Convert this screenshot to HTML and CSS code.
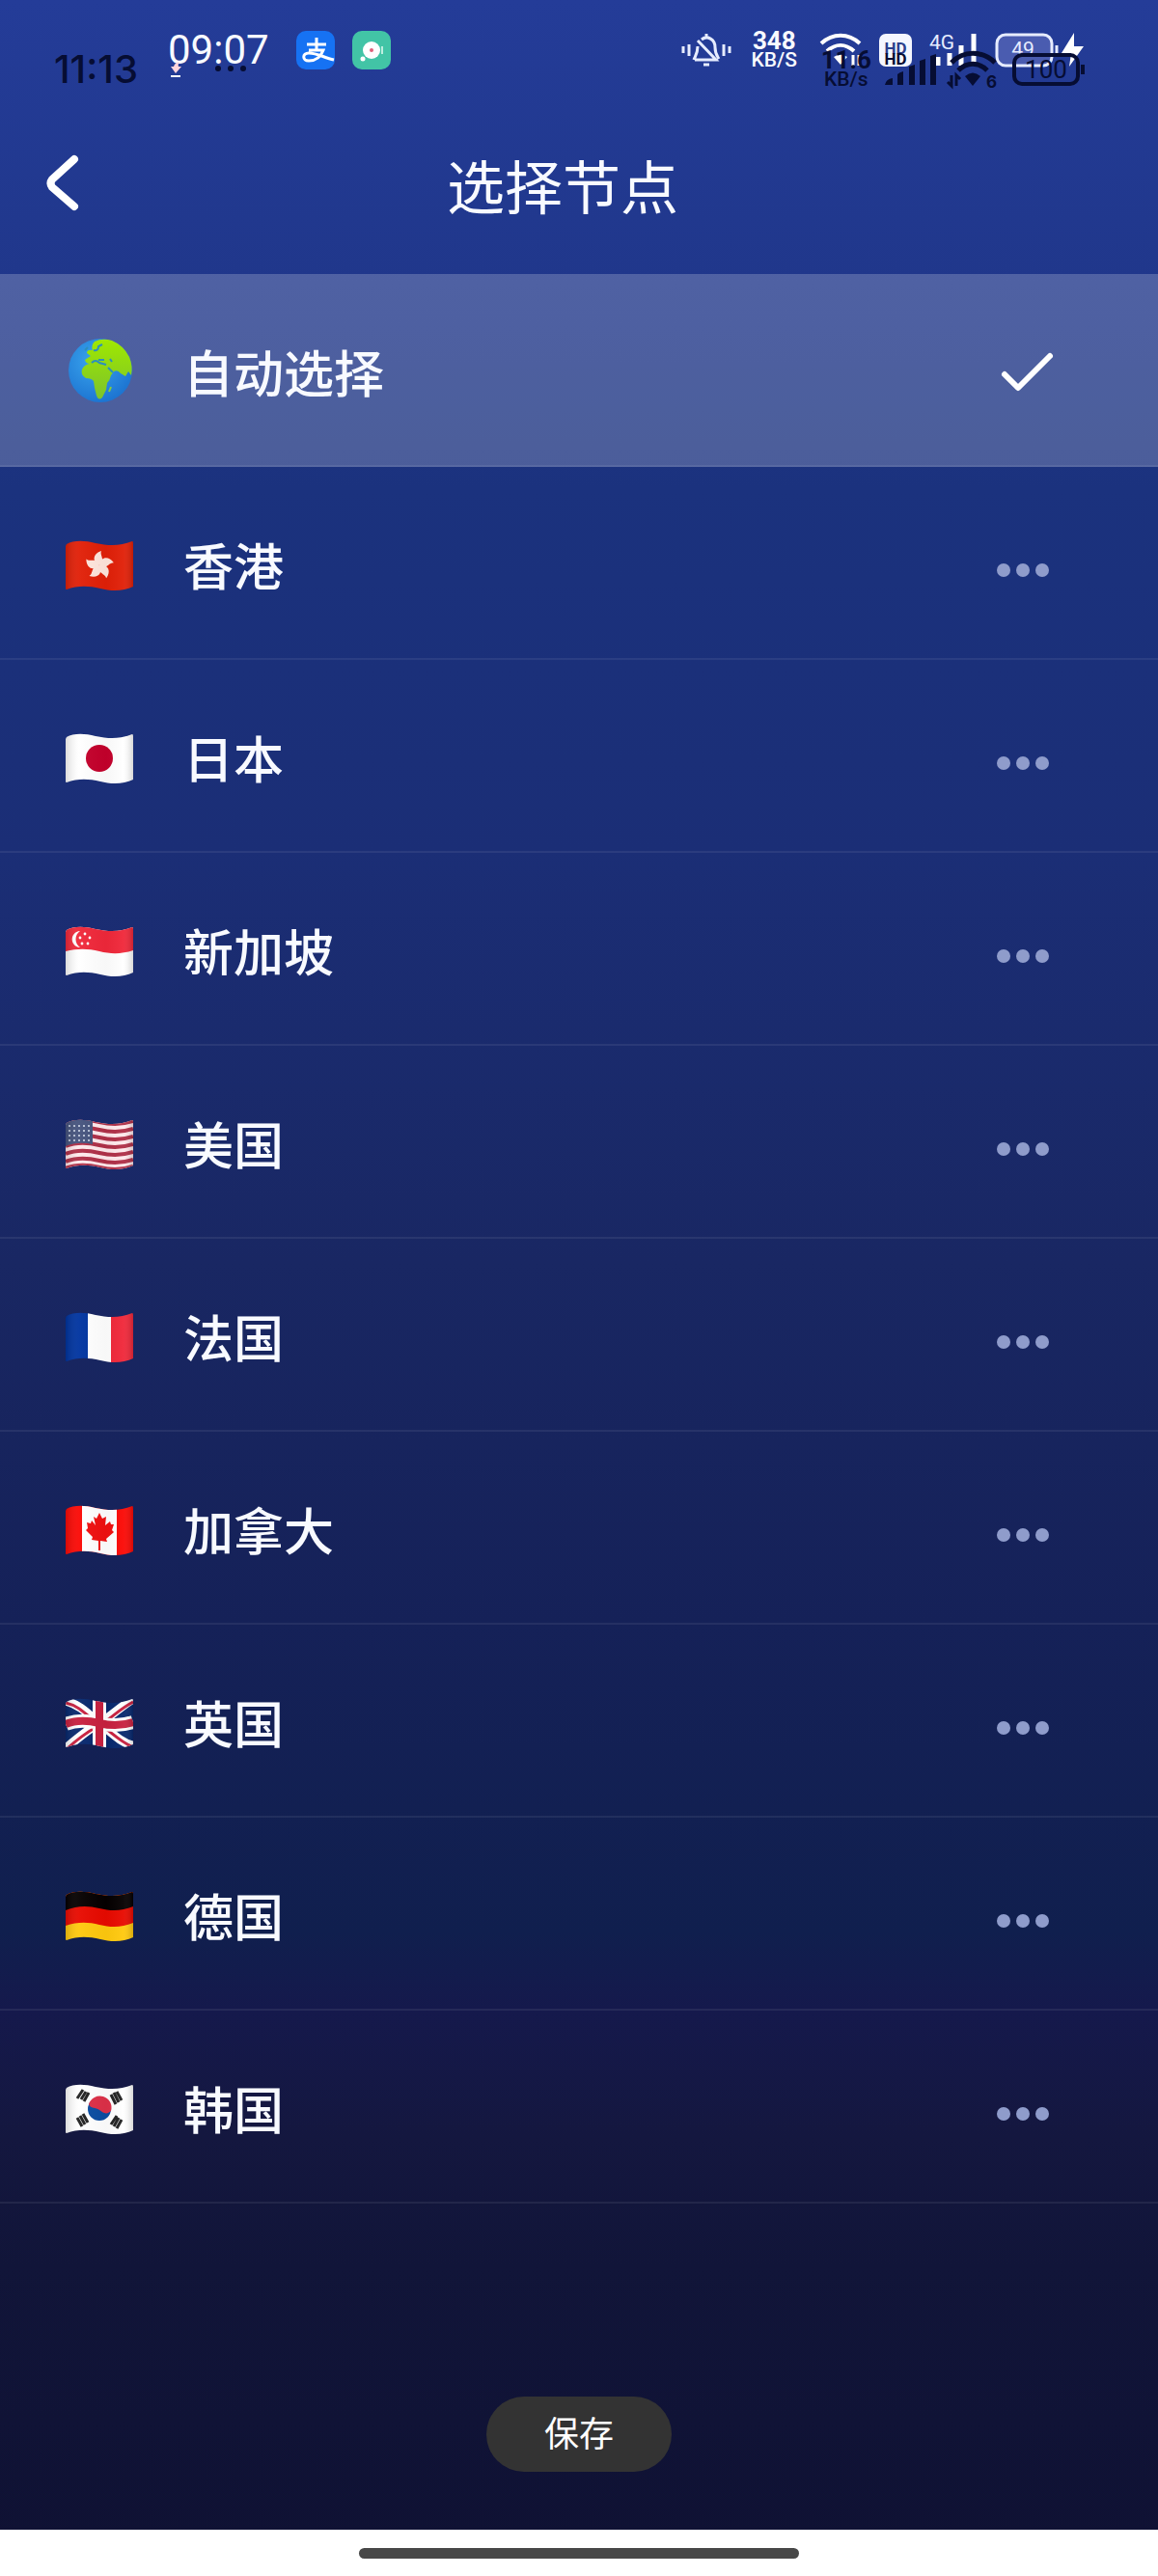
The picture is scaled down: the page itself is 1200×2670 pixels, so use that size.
FILE: index.html
```html
<!DOCTYPE html>
<html lang="zh-CN">
<head>
    <meta charset="UTF-8">
    <meta name="viewport" content="width=device-width, initial-scale=1.0">
    <title>选择节点</title>
    <link rel="stylesheet" href="styles.css">
</head>
<body>
    <!-- shared shapes -->
    <svg class="defs" width="0" height="0" aria-hidden="true">
        <defs>
            <clipPath id="wave">
                <path d="M1 4C8 0 19 0 31 3C45 6 57 6 69 1Q70 1 70 3V48C60 53 47 53 36 50C23 47 12 47 1 51Q0 51 0 50V6Z"/>
            </clipPath>
            <linearGradient id="shade">
                <stop offset="0" stop-color="#000" stop-opacity=".14"/>
                <stop offset=".2" stop-color="#fff" stop-opacity=".04"/>
                <stop offset=".6" stop-color="#000" stop-opacity=".03"/>
                <stop offset=".85" stop-color="#fff" stop-opacity=".04"/>
                <stop offset="1" stop-color="#000" stop-opacity=".16"/>
            </linearGradient>
            <radialGradient id="sea" cx=".4" cy=".35" r=".7">
                <stop offset="0" stop-color="#3aa5ee"/>
                <stop offset="1" stop-color="#1b72d0"/>
            </radialGradient>
            <linearGradient id="land" x1="0" y1="0" x2="0" y2="1">
                <stop offset="0" stop-color="#a0e800"/>
                <stop offset="1" stop-color="#7cc32c"/>
            </linearGradient>
        </defs>
        <symbol id="dots" viewBox="0 0 56 56">
            <circle cx="8" cy="36" r="7"/>
            <circle cx="28" cy="36" r="7"/>
            <circle cx="48" cy="36" r="7"/>
        </symbol>
    </svg>

    <header class="header">
        <div class="status status-light">
            <div class="status-side">
                <span class="clock">09:07</span>
                <div class="apps">
                    <svg width="40" height="40" viewBox="0 0 40 40">
                        <rect width="40" height="40" rx="10" fill="#1672f3"/>
                        <path d="M11 14H31M21 7V20M13 20H28C25 28 19 31 13 31C6 31 6 23 13 23C22 23 29 28 39 30" fill="none" stroke="#fff" stroke-width="3"/>
                    </svg>
                    <svg width="40" height="40" viewBox="0 0 40 40">
                        <rect width="40" height="40" rx="10" fill="#42c4a6"/>
                        <circle cx="20" cy="20" r="9" fill="#fff"/>
                        <circle cx="11" cy="29" r="2.5" fill="#fff"/>
                        <path d="M31 16V24" stroke="#bfeee0" stroke-width="2"/>
                        <circle cx="20" cy="20" r="2" fill="#e0607a"/>
                    </svg>
                </div>
            </div>
            <div class="status-side status-right">
                <svg width="52" height="36" viewBox="0 0 52 36" fill="none" stroke="#e6ecff" stroke-width="3">
                    <path d="M2 14V21M8 12V24M44 12V24M50 14V21"/>
                    <path d="M14 28H36L17 8M17 14C17 22 14 25 13 28M21 7C27 2 35 7 35 15C35 22 37 24 39 27M26 1V4M23 33H29"/>
                </svg>
                <div class="speed">
                    <span class="speed-num">348</span>
                    <span class="speed-unit">KB/S</span>
                </div>
                <svg width="44" height="36" viewBox="0 0 44 36" fill="none" stroke="#fff" stroke-width="4">
                    <path d="M2 11C14 0 30 0 42 11M8 19C17 11 27 11 36 19"/>
                    <path d="M15 25Q22 20 29 25L22 33Z" fill="#fff" stroke="none"/>
                    <path d="M35 23V34M41 23V34" stroke-width="3"/>
                </svg>
                <svg width="34" height="36" viewBox="0 0 34 36">
                    <rect y="1" width="34" height="34" rx="7" fill="#f4f6ff"/>
                    <text x="17" y="22" text-anchor="middle" class="hd hd-blue">HD</text>
                </svg>
                <svg width="50" height="36" viewBox="0 0 50 36">
                    <text x="0" y="17" class="net">4G</text>
                    <path d="M9 25V34M21 21V34M33 13V34M46 1V34" stroke="#fff" stroke-width="5"/>
                </svg>
                <svg width="92" height="36" viewBox="0 0 92 36">
                    <rect x="2" y="2" width="57" height="32" rx="9" fill="#4a5cb0" stroke="#e6ecff" stroke-width="3"/>
                    <path d="M64 13V25" stroke="#e6ecff" stroke-width="3"/>
                    <text x="29" y="24" text-anchor="middle" class="level">49</text>
                    <path d="M82 0L69 21H79L77 35L92 14H82Z" fill="#fff"/>
                </svg>
            </div>
        </div>

        <!-- second bar sits over the first one -->
        <div class="status status-dark">
            <div class="status-side">
                <span class="clock">11:13</span>
                <svg width="80" height="24" viewBox="0 0 80 24">
                    <path d="M0 19H10" stroke="#fff" stroke-width="2"/>
                    <path d="M0 9H3Q4 5 9 4Q7 7 8 9H11L5 16Z" fill="#ffd5dc"/>
                    <circle cx="49" cy="11" r="3"/>
                    <circle cx="62" cy="11" r="3"/>
                    <circle cx="75" cy="11" r="3"/>
                </svg>
            </div>
            <div class="status-side status-right">
                <div class="speed">
                    <span class="speed-num">11.6</span>
                    <span class="speed-unit">KB/s</span>
                </div>
                <svg width="54" height="44" viewBox="0 0 54 44">
                    <text x="11" y="17" text-anchor="middle" class="hd">HD</text>
                    <path d="M0 38Q1 32 8 31V38ZM13 27Q15 25 19 24V38H13ZM25 19L31 17V38H25ZM36 13L42 11V38H36ZM47 8L53 6V38H47Z"/>
                </svg>
                <svg width="50" height="44" viewBox="3 0 50 44">
                    <path d="M4 15C16 2 36 2 49 15M11 23C20 14 32 14 41 23" fill="none" stroke="#060d33" stroke-width="5"/>
                    <path d="M18 29Q26 22 34 29L26 39Z"/>
                    <path d="M4 28V39L0 35M9 39V28L13 32" fill="none" stroke="#060d33" stroke-width="3"/>
                    <text x="40" y="41" class="gen">6</text>
                </svg>
                <svg width="76" height="44" viewBox="0 0 76 44">
                    <rect x="2" y="7" width="66" height="30" rx="8" fill="none" stroke="#060d33" stroke-width="4"/>
                    <path d="M73 17V27" stroke="#060d33" stroke-width="4"/>
                    <text x="35" y="31" text-anchor="middle" class="full">100</text>
                </svg>
            </div>
        </div>

        <div class="title-bar">
            <button class="back" type="button" aria-label="返回">
                <svg width="36" height="60" viewBox="0 4 36 60" fill="none" stroke="#fff" stroke-width="8" stroke-linecap="round" stroke-linejoin="round">
                    <path d="M31 5L8 26Q5 30 8 34L31 54"/>
                </svg>
            </button>
            <h1 class="title">选择节点</h1>
        </div>
    </header>

    <main class="content">
        <ul class="nodes">
            <li class="node node-active">
                <button class="pick" type="button">
                    <svg class="flag" viewBox="0 4 70 70">
                        <circle cx="36" cy="36" r="33" fill="url(#sea)"/>
                        <path d="M30 6Q38 2 48 5Q60 10 66 22Q70 32 68 41L65 37L62 42L57 39Q54 35 50 37L47 41Q46 46 43 49L42 56L38 64Q34 68 32 62L30 54L29 47Q27 44 21 44Q15 40 17 35Q19 30 25 29Q21 29 20 25L26 21L22 18Q22 14 28 15Q26 10 30 6Z" fill="url(#land)"/>
                        <path d="M20 15L23 12M29 15Q34 16 34 11L38 9M27 28Q31 24 35 28L42 30M34 25L40 25M46 24L48 27M44 33L49 38" fill="none" stroke="#2c8fbd" stroke-width="2"/>
                        <path d="M45 58L47 53" stroke="#84cc3c" stroke-width="2"/>
                    </svg>
                    <span>自动选择</span>
                </button>
                <svg class="check" width="56" height="56" viewBox="0 0 56 56" fill="none" stroke="#fff" stroke-width="6" stroke-linecap="round" stroke-linejoin="round">
                    <path d="M9 33L23 47L56 14"/>
                </svg>
            </li>
            <li class="node">
                <button class="pick" type="button">
                    <svg class="flag" viewBox="0 -8 70 70">
                        <g clip-path="url(#wave)">
                            <rect width="70" height="54" fill="#e12008"/>
                            <g fill="#ffe6dc">
                                <path id="petal" d="M35 26C27 22 28 14 37 11C35 16 42 20 35 26Z"/>
                                <use href="#petal" transform="rotate(72 35 26)"/>
                                <use href="#petal" transform="rotate(144 35 26)"/>
                                <use href="#petal" transform="rotate(216 35 26)"/>
                                <use href="#petal" transform="rotate(288 35 26)"/>
                            </g>
                            <rect width="70" height="54" fill="url(#shade)"/>
                        </g>
                    </svg>
                    <span>香港</span>
                </button>
                <button class="more" type="button" aria-label="香港 更多"><svg width="56" height="56"><use href="#dots"/></svg></button>
            </li>
            <li class="node">
                <button class="pick" type="button">
                    <svg class="flag" viewBox="0 -8 70 70">
                        <g clip-path="url(#wave)">
                            <rect width="70" height="54" fill="#fff"/>
                            <circle cx="35" cy="26" r="14" fill="#c4002b"/>
                            <rect width="70" height="54" fill="url(#shade)"/>
                        </g>
                    </svg>
                    <span>日本</span>
                </button>
                <button class="more" type="button" aria-label="日本 更多"><svg width="56" height="56"><use href="#dots"/></svg></button>
            </li>
            <li class="node">
                <button class="pick" type="button">
                    <svg class="flag" viewBox="0 -8 70 70">
                        <g clip-path="url(#wave)">
                            <rect width="70" height="54" fill="#fff"/>
                            <path d="M0 0H70V25C58 29 47 29 35 26C23 23 12 23 0 26Z" fill="#f0283a"/>
                            <path d="M15 5C4 6 4 21 15 22C9 18 9 9 15 5Z" fill="#fff"/>
                            <g fill="#fff">
                                <circle cx="20" cy="8" r="1.4"/>
                                <circle cx="15" cy="12" r="1.4"/>
                                <circle cx="25" cy="12" r="1.4"/>
                                <circle cx="17" cy="18" r="1.4"/>
                                <circle cx="23" cy="18" r="1.4"/>
                            </g>
                            <rect width="70" height="54" fill="url(#shade)"/>
                        </g>
                    </svg>
                    <span>新加坡</span>
                </button>
                <button class="more" type="button" aria-label="新加坡 更多"><svg width="56" height="56"><use href="#dots"/></svg></button>
            </li>
            <li class="node">
                <button class="pick" type="button">
                    <svg class="flag" viewBox="0 -8 70 70">
                        <g clip-path="url(#wave)">
                            <rect width="70" height="54" fill="#ffe9ec"/>
                            <g fill="none" stroke="#b03048" stroke-width="4">
                                <path id="stripe" d="M0 4C12 -1 23 0 35 3C47 6 58 6 70 2"/>
                                <use href="#stripe" y="8"/>
                                <use href="#stripe" y="16"/>
                                <use href="#stripe" y="24"/>
                                <use href="#stripe" y="32"/>
                                <use href="#stripe" y="40"/>
                                <use href="#stripe" y="47"/>
                            </g>
                            <path d="M0 0H28V26C19 24 9 24 0 28Z" fill="#46547e"/>
                            <path d="M3 7H27M3 12H27M3 17H27M3 22H27" stroke="#b4bdd2" stroke-width="2" stroke-dasharray="2 3"/>
                            <rect width="70" height="54" fill="url(#shade)"/>
                        </g>
                    </svg>
                    <span>美国</span>
                </button>
                <button class="more" type="button" aria-label="美国 更多"><svg width="56" height="56"><use href="#dots"/></svg></button>
            </li>
            <li class="node">
                <button class="pick" type="button">
                    <svg class="flag" viewBox="0 -8 70 70">
                        <g clip-path="url(#wave)">
                            <rect width="24" height="54" fill="#0034a0"/>
                            <rect x="23" width="24" height="54" fill="#fff"/>
                            <rect x="47" width="23" height="54" fill="#f0283a"/>
                            <rect width="70" height="54" fill="url(#shade)"/>
                        </g>
                    </svg>
                    <span>法国</span>
                </button>
                <button class="more" type="button" aria-label="法国 更多"><svg width="56" height="56"><use href="#dots"/></svg></button>
            </li>
            <li class="node">
                <button class="pick" type="button">
                    <svg class="flag" viewBox="0 -8 70 70">
                        <g clip-path="url(#wave)">
                            <rect width="70" height="54" fill="#fb0a06"/>
                            <rect x="17" width="36" height="54" fill="#fff"/>
                            <path d="M35 8L38 14L42 12L41 21L46 17L47 20L50 20L48 26L50 28L42 35L43 38L36 37V47H34V37L27 36L28 33L21 26L23 24L22 18L26 19L27 16L31 21L29 12L32 14Z" fill="#f01010"/>
                            <rect width="70" height="54" fill="url(#shade)"/>
                        </g>
                    </svg>
                    <span>加拿大</span>
                </button>
                <button class="more" type="button" aria-label="加拿大 更多"><svg width="56" height="56"><use href="#dots"/></svg></button>
            </li>
            <li class="node">
                <button class="pick" type="button">
                    <svg class="flag" viewBox="0 -8 70 70">
                        <g clip-path="url(#wave)" fill="none">
                            <rect width="70" height="54" fill="#07286e"/>
                            <path d="M0 3C18 8 26 20 35 26C46 34 56 46 70 49M70 1C58 8 46 20 35 26C24 32 12 42 0 52" stroke="#fff" stroke-width="9"/>
                            <path d="M0 5C14 8 22 18 30 24M42 32C50 38 58 46 70 51M70 4C58 10 48 20 40 25M30 31C20 37 12 43 2 52" stroke="#c8203f" stroke-width="3"/>
                            <path d="M35 0V54M0 27C12 22 23 23 35 26C47 29 58 29 70 25" stroke="#fff" stroke-width="14"/>
                            <path d="M35 0V54M0 27C12 22 23 23 35 26C47 29 58 29 70 25" stroke="#c8203f" stroke-width="8"/>
                            <rect width="70" height="54" fill="url(#shade)"/>
                        </g>
                    </svg>
                    <span>英国</span>
                </button>
                <button class="more" type="button" aria-label="英国 更多"><svg width="56" height="56"><use href="#dots"/></svg></button>
            </li>
            <li class="node">
                <button class="pick" type="button">
                    <svg class="flag" viewBox="0 -8 70 70">
                        <g clip-path="url(#wave)">
                            <rect width="70" height="54" fill="#ffc90e"/>
                            <path d="M0 0H70V33C58 38 47 38 35 35C23 32 12 32 0 36Z" fill="#e80a00"/>
                            <path d="M0 0H70V16C58 21 47 21 35 18C23 15 12 15 0 20Z" fill="#050000"/>
                            <rect width="70" height="54" fill="url(#shade)"/>
                        </g>
                    </svg>
                    <span>德国</span>
                </button>
                <button class="more" type="button" aria-label="德国 更多"><svg width="56" height="56"><use href="#dots"/></svg></button>
            </li>
            <li class="node">
                <button class="pick" type="button">
                    <svg class="flag" viewBox="0 -8 70 70">
                        <g clip-path="url(#wave)">
                            <rect width="70" height="54" fill="#fff"/>
                            <circle cx="35" cy="26" r="12" fill="#0a4da2"/>
                            <path d="M24 21A12 12 0 0 1 47 28C42 33 38 29 35 27C31 24 26 26 24 21Z" fill="#dd3048"/>
                            <g stroke="#222" stroke-width="3">
                                <path d="M12 15L18 6M16 16L21 8M19 18L24 9"/>
                                <path d="M47 11L52 21M50 9L55 19M53 8L58 17"/>
                                <path d="M12 35L17 44M15 33L20 42M18 31L23 40"/>
                                <path d="M47 42L53 33M50 44L55 35M53 46L58 37"/>
                            </g>
                            <rect width="70" height="54" fill="url(#shade)"/>
                        </g>
                    </svg>
                    <span>韩国</span>
                </button>
                <button class="more" type="button" aria-label="韩国 更多"><svg width="56" height="56"><use href="#dots"/></svg></button>
            </li>
        </ul>
        <button class="save" type="button">保存</button>
    </main>

    <footer class="home-bar"><span></span></footer>
</body>
</html>
```

FILE: styles.css
```css
* { box-sizing: border-box; }

body {
    margin: 0;
    min-height: 100vh;
    display: flex;
    flex-direction: column;
    font-family: "Noto Sans", "Noto Sans CJK SC", sans-serif;
    color: #f8faff;
    background: linear-gradient(#243c98 0%, #20378b 11%, #1b327e 19%, #1b2e76 33%, #192763 49%, #152158 63%, #101f4e 75%, #15194c 78%, #14173f 83%, #111539 88%, #0f1133 100%);
}

button {
    margin: 0;
    padding: 0;
    border: 0;
    background: none;
    color: inherit;
    font: inherit;
    cursor: pointer;
}

svg { display: block; flex: none; overflow: visible; }
.defs { position: absolute; }

/* status bars */
.header { position: relative; }
.status {
    display: flex;
    justify-content: space-between;
    align-items: center;
    font-family: Roboto, sans-serif;
}
.status-side { display: flex; align-items: center; }
.clock { font-size: 42px; line-height: 48px; }
.speed { display: flex; flex-direction: column; align-items: center; }
.speed-num { font-size: 26px; line-height: 20px; font-weight: 700; }
.speed-unit { font-size: 21px; line-height: 20px; font-weight: 500; }
.hd { font-size: 17px; font-weight: 700; }
.hd-blue { fill: #2b3f8c; }
.net { font-size: 21px; fill: #e6ecff; }
.level { font-size: 21px; fill: #e6ecff; }
.gen { font: 700 17px Inter, sans-serif; }
.full { font-size: 26px; }

.status-light { height: 104px; padding: 0 77px 0 174px; }
.status-light .status-side { gap: 28px; }
.status-light .status-right { gap: 18px; }
.status-light .speed { margin: 0 5px 0 3px; }
.apps { display: flex; gap: 18px; }

.status-dark {
    position: absolute;
    top: 0;
    left: 0;
    right: 0;
    height: 144px;
    padding: 0 75px 0 56px;
    color: #060d33;
    fill: #060d33;
}
.status-dark .status-side { gap: 34px; }
.status-dark .status-right { gap: 14px; }
.status-dark .clock { font-family: Inter, sans-serif; font-size: 40px; font-weight: 500; }

/* title */
.title-bar {
    display: flex;
    align-items: center;
    height: 180px;
    padding: 0 116px 0 46px;
}
.back { height: 60px; }
.title {
    flex: 1;
    margin: 0;
    font-size: 60px;
    line-height: 80px;
    font-weight: 400;
    text-align: center;
}

/* node list */
.content {
    flex: 1;
    display: flex;
    flex-direction: column;
    align-items: center;
}
.nodes {
    width: 100%;
    margin: 0;
    padding: 0;
    list-style: none;
}
.node {
    display: flex;
    align-items: center;
    height: 200px;
    padding: 0 112px 0 68px;
    border-bottom: 2px solid rgba(255, 255, 255, .07);
}
.node-active { background: rgba(255, 255, 255, .21); }
.pick {
    flex: 1;
    display: flex;
    align-items: center;
    gap: 52px;
    height: 100%;
    padding-top: 8px;
    font-size: 52px;
    line-height: 76px;
    font-weight: 500;
    text-align: left;
}
.flag { width: 70px; height: 70px; }
.more { fill: #8f9ccb; }

.save {
    margin: auto 0 60px;
    padding: 0 60px;
    border-radius: 39px;
    background: #333;
    color: #fff;
    font-size: 36px;
    line-height: 78px;
}

.home-bar {
    display: flex;
    justify-content: center;
    padding: 19px 0 18px;
    background: #fff;
}
.home-bar span {
    width: 38%;
    height: 11px;
    border-radius: 6px;
    background: #484848;
}
```
